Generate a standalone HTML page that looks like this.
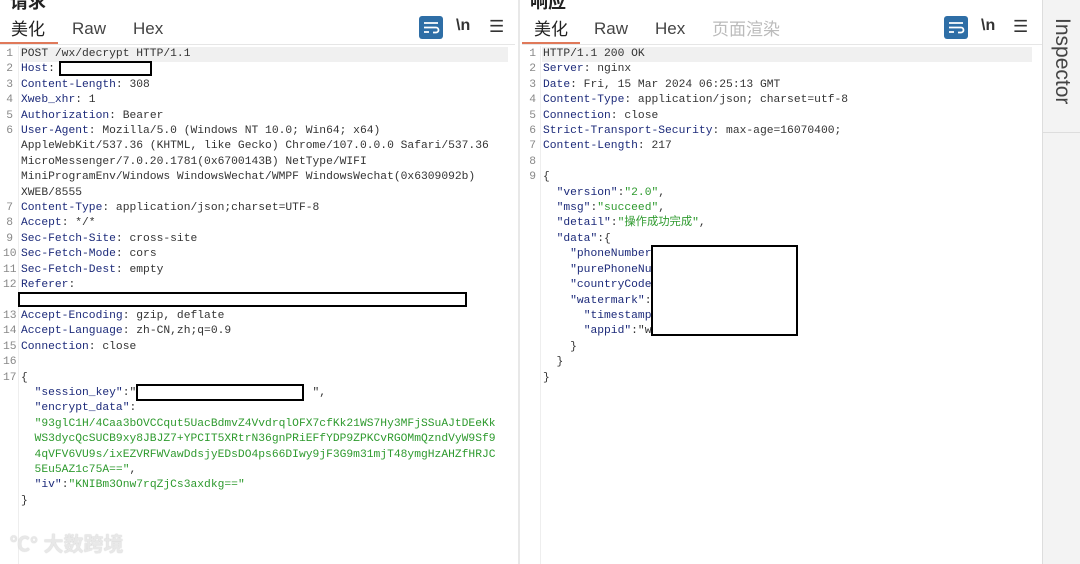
<!DOCTYPE html>
<html><head><meta charset="utf-8"><style>
body{margin:0;width:1080px;height:564px;background:#fff;overflow:hidden;position:relative;font-family:"Liberation Sans","Noto Sans CJK SC",sans-serif}
.abs{position:absolute}
.code{position:absolute;font-family:"Liberation Mono","Noto Sans CJK SC",monospace;font-size:11.3px;line-height:15.4px;white-space:pre;color:#333}
.ln{position:absolute;font-family:"Liberation Mono",monospace;font-size:11.3px;line-height:15.4px;white-space:pre;color:#888;text-align:right;width:10px}
.k{color:#1c2a7a}.v{color:#2e9a2e}.s{color:#1c2a7a}
.tab{position:absolute;top:18px;font-size:17px;line-height:22px;height:22px;color:#444}
.cj{font-family:"Noto Sans CJK SC",sans-serif;top:17px}
.box{position:absolute;border:2px solid #000;background:#fff;box-sizing:border-box}
</style></head><body>
<div class="abs" style="left:10px;top:-12px;font-size:18px;font-weight:bold;color:#222">请求</div>
<div class="abs" style="left:530px;top:-12px;font-size:18px;font-weight:bold;color:#222">响应</div>
<div class="tab cj" style="left:11px;color:#222">美化</div>
<div class="tab" style="left:72px">Raw</div>
<div class="tab" style="left:133px">Hex</div>
<div class="abs" style="left:0;top:42px;width:58px;height:2px;background:#e0795a"></div>
<div class="abs" style="left:0;top:44px;width:515px;height:1px;background:#e6e6e6"></div>
<div class="abs" style="left:419px;top:16px;width:24px;height:23px;background:#2e6ea6;border-radius:3px"></div>
<svg class="abs" style="left:419px;top:16px" width="24" height="23"><path d="M5 7h14M5 11.5h12a2.5 2.5 0 0 1 0 5h-3M5 16h5" stroke="#fff" stroke-width="1.8" fill="none"/></svg>
<div class="abs" style="left:456px;top:17px;font-size:16px;font-weight:bold;color:#333">\n</div>
<div class="abs" style="left:489px;top:17px;font-size:17px;color:#333">☰</div>
<div class="tab cj" style="left:534px;color:#222">美化</div>
<div class="tab" style="left:594px">Raw</div>
<div class="tab" style="left:655px">Hex</div>
<div class="tab cj" style="left:712px;color:#bbb">页面渲染</div>
<div class="abs" style="left:522px;top:42px;width:58px;height:2px;background:#e0795a"></div>
<div class="abs" style="left:522px;top:44px;width:520px;height:1px;background:#e6e6e6"></div>
<div class="abs" style="left:944px;top:16px;width:24px;height:23px;background:#2e6ea6;border-radius:3px"></div>
<svg class="abs" style="left:944px;top:16px" width="24" height="23"><path d="M5 7h14M5 11.5h12a2.5 2.5 0 0 1 0 5h-3M5 16h5" stroke="#fff" stroke-width="1.8" fill="none"/></svg>
<div class="abs" style="left:981px;top:17px;font-size:16px;font-weight:bold;color:#333">\n</div>
<div class="abs" style="left:1013px;top:17px;font-size:17px;color:#333">☰</div>
<div class="abs" style="left:518px;top:0;width:2px;height:564px;background:#e8e8e8"></div>
<div class="abs" style="left:1042px;top:0;width:38px;height:564px;background:#f3f3f3;border-left:1px solid #ddd"></div>
<div class="abs" style="left:1043px;top:132px;width:37px;height:1px;background:#ddd"></div>
<div class="abs" style="left:1050px;top:18px;font-size:21px;color:#444;writing-mode:vertical-rl">Inspector</div>
<div class="abs" style="left:20px;top:47px;width:488px;height:15px;background:#f0f0f0"></div>
<div class="abs" style="left:542px;top:47px;width:490px;height:15px;background:#f0f0f0"></div>
<div class="abs" style="left:18px;top:46px;width:1px;height:518px;background:#eee"></div>
<div class="abs" style="left:540px;top:46px;width:1px;height:518px;background:#eee"></div>
<div class="ln" style="left:3px;top:47px">1
2
3
4
5
6




7
8
9
10
11
12

13
14
15
16
17</div>
<div class="code" style="left:21px;top:47px">POST /wx/decrypt HTTP/1.1
<span class="k">Host</span>:
<span class="k">Content-Length</span>: 308
<span class="k">Xweb_xhr</span>: 1
<span class="k">Authorization</span>: Bearer
<span class="k">User-Agent</span>: Mozilla/5.0 (Windows NT 10.0; Win64; x64)
AppleWebKit/537.36 (KHTML, like Gecko) Chrome/107.0.0.0 Safari/537.36
MicroMessenger/7.0.20.1781(0x6700143B) NetType/WIFI
MiniProgramEnv/Windows WindowsWechat/WMPF WindowsWechat(0x6309092b)
XWEB/8555
<span class="k">Content-Type</span>: application/json;charset=UTF-8
<span class="k">Accept</span>: */*
<span class="k">Sec-Fetch-Site</span>: cross-site
<span class="k">Sec-Fetch-Mode</span>: cors
<span class="k">Sec-Fetch-Dest</span>: empty
<span class="k">Referer</span>:

<span class="k">Accept-Encoding</span>: gzip, deflate
<span class="k">Accept-Language</span>: zh-CN,zh;q=0.9
<span class="k">Connection</span>: close

{
  <span class="s">"session_key"</span>:"                          ",
  <span class="s">"encrypt_data"</span>:
  <span class="v">"93glC1H/4Caa3bOVCCqut5UacBdmvZ4VvdrqlOFX7cfKk21WS7Hy3MFjSSuAJtDEeKk
  WS3dycQcSUCB9xy8JBJZ7+YPCIT5XRtrN36gnPRiEFfYDP9ZPKCvRGOMmQzndVyW9Sf9
  4qVFV6VU9s/ixEZVRFWVawDdsjyEDsDO4ps66DIwy9jF3G9m31mjT48ymgHzAHZfHRJC
  5Eu5AZ1c75A=="</span>,
  <span class="s">"iv"</span>:<span class="v">"KNIBm3Onw7rqZjCs3axdkg=="</span>
}</div>
<div class="box" style="left:59px;top:61px;width:93px;height:15px"></div>
<div class="box" style="left:18px;top:292px;width:449px;height:15px"></div>
<div class="box" style="left:136px;top:384px;width:168px;height:17px"></div>
<div class="ln" style="left:526px;top:47px">1
2
3
4
5
6
7
8
9</div>
<div class="code" style="left:543px;top:47px">HTTP/1.1 200 OK
<span class="k">Server</span>: nginx
<span class="k">Date</span>: Fri, 15 Mar 2024 06:25:13 GMT
<span class="k">Content-Type</span>: application/json; charset=utf-8
<span class="k">Connection</span>: close
<span class="k">Strict-Transport-Security</span>: max-age=16070400;
<span class="k">Content-Length</span>: 217

{
  <span class="s">"version"</span>:<span class="v">"2.0"</span>,
  <span class="s">"msg"</span>:<span class="v">"succeed"</span>,
  <span class="s">"detail"</span>:<span class="v">"操作成功完成"</span>,
  <span class="s">"data"</span>:{
    <span class="s">"phoneNumber"</span>
    <span class="s">"purePhoneNu</span>
    <span class="s">"countryCode</span>
    <span class="s">"watermark"</span>:
      <span class="s">"timestamp</span>
      <span class="s">"appid"</span>:"w
    }
  }
}</div>
<div class="box" style="left:651px;top:245px;width:147px;height:91px"></div>
<div class="abs" style="left:10px;top:528px;font-size:20px;font-weight:bold;color:#e8e8e8;text-shadow:0 0 1px #bbb">℃° 大数跨境</div>
</body></html>
